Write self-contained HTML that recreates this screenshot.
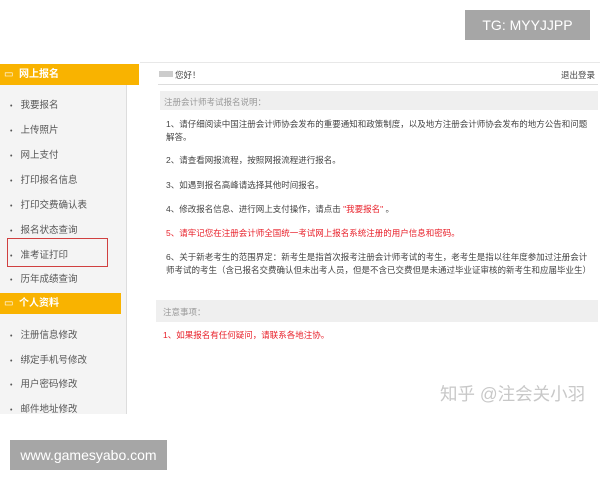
<!DOCTYPE html>
<html><head><meta charset="utf-8"><style>
body{margin:0;width:600px;height:480px;background:#fff;position:relative;overflow:hidden;font-family:"Liberation Sans","Noto Sans CJK SC",sans-serif;color:#444}
.a{position:absolute;white-space:nowrap}
.side{position:absolute;left:0;top:64px;width:126px;height:350px;background:#f4f4f4;border-right:1px solid #ddd}
.hd{position:absolute;left:0;width:139px;height:21px;background:#f9b300;color:#fff;font-size:10px;font-weight:bold;line-height:21px}
.it{position:absolute;left:10px;font-size:9.5px;color:#555}
.it:before{content:"•";margin-right:8px;font-size:7px}
.main{font-size:8.5px;color:#444}
.bar{position:absolute;background:#efefef}
.r{color:#e8202a}
</style></head><body>
<div class="side"></div>
<div class="hd" style="top:64px"><span style="margin-left:4px;font-weight:normal">▭</span>&nbsp; 网上报名</div>
<div class="it" style="top:97px">我要报名</div>
<div class="it" style="top:122px">上传照片</div>
<div class="it" style="top:147px">网上支付</div>
<div class="it" style="top:172px">打印报名信息</div>
<div class="it" style="top:197px">打印交费确认表</div>
<div class="it" style="top:222px">报名状态查询</div>
<div class="it" style="top:247px">准考证打印</div>
<div class="a" style="left:7px;top:238px;width:99px;height:27px;border:1.5px solid #d04040"></div>
<div class="it" style="top:271px">历年成绩查询</div>
<div class="hd" style="top:293px;width:121px"><span style="margin-left:4px;font-weight:normal">▭</span>&nbsp; 个人资料</div>
<div class="it" style="top:327px">注册信息修改</div>
<div class="it" style="top:352px">绑定手机号修改</div>
<div class="it" style="top:376px">用户密码修改</div>
<div class="it" style="top:401px">邮件地址修改</div>

<div class="a" style="left:140px;top:62px;width:460px;height:352px;border-top:1px solid #e8e8e8"></div>
<div class="a" style="left:159px;top:71px;width:14px;height:6px;background:#ccc"></div>
<div class="a main" style="left:175px;top:69px">您好！</div>
<div class="a main" style="left:561px;top:69px">退出登录</div>
<div class="a" style="left:158px;top:84px;width:440px;height:1px;background:#ddd"></div>
<div class="bar" style="left:160px;top:91px;width:438px;height:19px"></div>
<div class="a main" style="left:164px;top:96px;color:#999">注册会计师考试报名说明：</div>
<div class="a main" style="left:166px;top:118px;line-height:13px">1、请仔细阅读中国注册会计师协会发布的重要通知和政策制度，以及地方注册会计师协会发布的地方公告和问题<br>解答。</div>
<div class="a main" style="left:166px;top:154px">2、请查看网报流程，按照网报流程进行报名。</div>
<div class="a main" style="left:166px;top:179px">3、如遇到报名高峰请选择其他时间报名。</div>
<div class="a main" style="left:166px;top:203px">4、修改报名信息、进行网上支付操作，请点击 <span class="r">"我要报名"</span> 。</div>
<div class="a main r" style="left:166px;top:227px">5、请牢记您在注册会计师全国统一考试网上报名系统注册的用户信息和密码。</div>
<div class="a main" style="left:166px;top:251px;line-height:13px">6、关于新老考生的范围界定：新考生是指首次报考注册会计师考试的考生，老考生是指以往年度参加过注册会计<br>师考试的考生（含已报名交费确认但未出考人员，但是不含已交费但是未通过毕业证审核的新考生和应届毕业生）</div>
<div class="bar" style="left:156px;top:300px;width:442px;height:22px"></div>
<div class="a main" style="left:163px;top:306px;color:#999">注意事项：</div>
<div class="a main r" style="left:163px;top:329px">1、如果报名有任何疑问，请联系各地注协。</div>
<div class="a" style="left:440px;top:381px;font-size:17.5px;color:#c8c8c8">知乎 @注会关小羽</div>

<div class="a" style="left:465px;top:10px;width:125px;height:30px;background:#a6a6a6;color:#fff;font-size:14px;line-height:30px;text-align:center">TG: MYYJJPP</div>
<div class="a" style="left:10px;top:440px;width:157px;height:30px;background:#a6a6a6;color:#fff;font-size:14px;line-height:30px;text-align:center">www.gamesyabo.com</div>
</body></html>
